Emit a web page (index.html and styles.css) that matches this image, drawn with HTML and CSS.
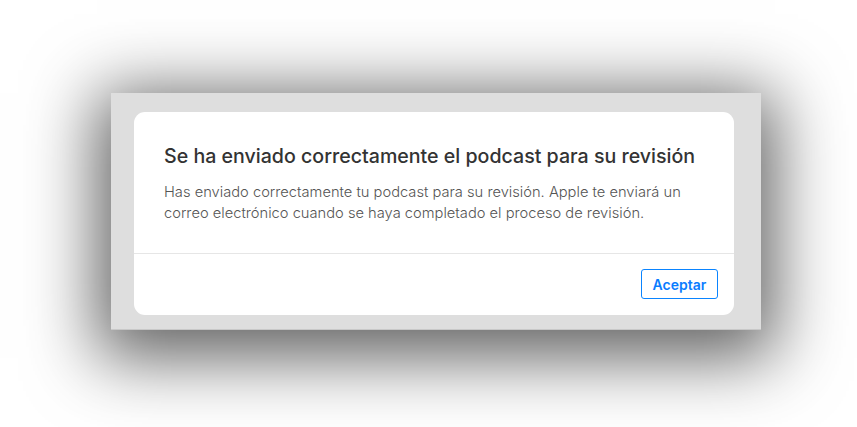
FILE: index.html
```html
<!DOCTYPE html>
<html lang="es">
<head>
<meta charset="utf-8">
<title>Podcast enviado</title>
<link rel="stylesheet" href="styles.css">
</head>
<body>
<div class="stage">
  <div class="panel">
    <div class="dialog">
      <div class="dialog-body">
        <h1 class="title">Se ha enviado correctamente el podcast para su revisión</h1>
        <p class="text">Has enviado correctamente tu podcast para su revisión. Apple te enviará un correo electrónico cuando se haya completado el proceso de revisión.</p>
      </div>
      <div class="dialog-footer">
        <button class="btn">Aceptar</button>
      </div>
    </div>
  </div>
</div>
</body>
</html>
```
FILE: styles.css
```css
html, body {
  margin: 0;
  padding: 0;
  background: #ffffff;
  overflow: hidden;
}
body {
  width: 857px;
  height: 427px;
  font-family: Inter, "Noto Sans", sans-serif;
}
.stage {
  padding: 93px 0 0 111px;
}
.panel {
  width: 650px;
  height: 237px;
  box-sizing: border-box;
  background: #dedede;
  border-bottom: 1px solid #c8c8c8;
  padding: 19px 27px 0 23px;
  box-shadow: 0 14px 65px 14px rgba(0, 0, 0, 0.62);
}
.dialog {
  width: 600px;
  height: 203px;
  background: #ffffff;
  border-radius: 11px;
  display: flex;
  flex-direction: column;
}
.dialog-body {
  padding: 32px 20px 0 30px;
  height: 142px;
  box-sizing: border-box;
  border-bottom: 1px solid #e6e6e6;
}
.title {
  margin: 0;
  font-size: 19.6px;
  line-height: 25px;
  font-weight: 500;
  color: #333333;
  white-space: nowrap;
}
.text {
  margin: 13px 0 0 0;
  max-width: 525px;
  font-size: 14.7px;
  line-height: 21px;
  font-weight: 300;
  color: #555555;
}
.dialog-footer {
  display: flex;
  justify-content: flex-end;
  padding: 15px 16px 0 0;
}
.btn {
  width: 77px;
  height: 30px;
  box-sizing: border-box;
  border: 1px solid #0a84ff;
  border-radius: 3px;
  background: #ffffff;
  color: #0a7cff;
  font-family: Inter, "Noto Sans", sans-serif;
  font-size: 14px;
  font-weight: 600;
  padding: 0;
}
```
